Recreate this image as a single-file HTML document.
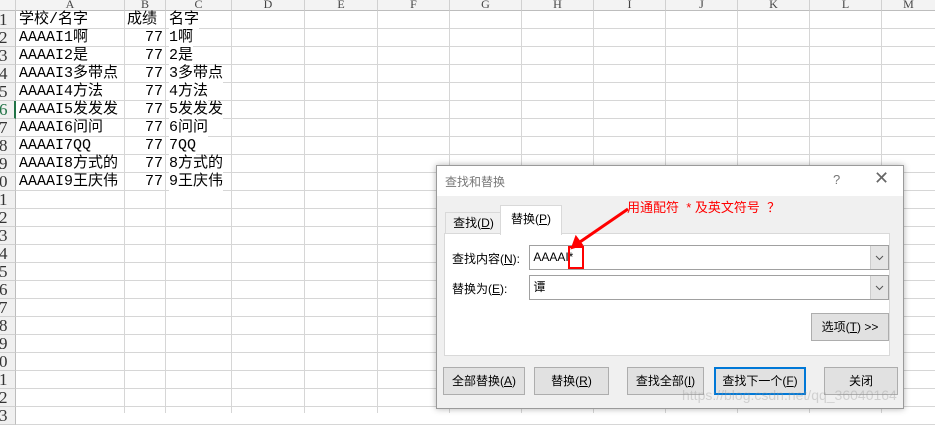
<!DOCTYPE html>
<html><head><meta charset="utf-8"><style>
body{margin:0;width:935px;height:413px;overflow:hidden;background:#fff;font-family:"Liberation Sans","Noto Sans CJK SC",sans-serif;position:relative}
.abs{position:absolute}
.ch{position:absolute;top:0;height:10px;background:#f3f3f3;border-right:1px solid #d0d0d0;border-bottom:1px solid #bdbdbd;font:12px "Liberation Serif",serif;line-height:9px;text-align:center;color:#444;overflow:hidden}
.rh{position:absolute;left:0;width:15px;height:17px;background:#f0f0f0;border-right:1px solid #bdbdbd;border-bottom:1px solid #d0d0d0;font:17px "Liberation Serif",serif;line-height:18px;text-align:left;color:#333;overflow:hidden;white-space:nowrap;text-indent:-1px}
.hl{position:absolute;left:16px;right:0;height:1px;background:#d6d6d6}
.vl{position:absolute;top:11px;bottom:0;width:1px;background:#d6d6d6}
.c{position:absolute;font-size:15px;line-height:18px;white-space:nowrap;color:#000;font-family:"Liberation Mono","Noto Sans CJK SC",monospace}
.dlg{position:absolute;left:436px;top:165px;width:466px;height:242px;background:#f0f0f0;border:1px solid #9a9a9a;box-shadow:0 0 6px rgba(0,0,0,.3)}
.btn{position:absolute;height:26px;border:1px solid #adadad;background:#e1e1e1;font-size:12px;line-height:26px;text-align:center;color:#000}
.inp{position:absolute;left:92px;width:358px;height:23px;background:#fff;border:1px solid #a0a0a0;font-size:12px;line-height:22px}
.dd{position:absolute;right:0;top:0;width:17px;height:23px;background:#e5e5e5;border-left:1px solid #ccc}
.lab{position:absolute;left:15px;font-size:12px;color:#000}
</style></head><body>
<div class="ch" style="left:0;width:15px"></div>
<div class="ch" style="left:16px;width:108px">A</div>
<div class="ch" style="left:125px;width:40px">B</div>
<div class="ch" style="left:166px;width:65px">C</div>
<div class="ch" style="left:232px;width:72px">D</div>
<div class="ch" style="left:305px;width:72px">E</div>
<div class="ch" style="left:378px;width:71px">F</div>
<div class="ch" style="left:450px;width:71px">G</div>
<div class="ch" style="left:522px;width:71px">H</div>
<div class="ch" style="left:594px;width:71px">I</div>
<div class="ch" style="left:666px;width:71px">J</div>
<div class="ch" style="left:738px;width:71px">K</div>
<div class="ch" style="left:810px;width:71px">L</div>
<div class="ch" style="left:882px;width:53px">M</div>
<div id="g"></div>
<script>
var g=document.getElementById('g'),h='';
for(var i=1;i<=23;i++){var y=11+(i-1)*18;h+='<div class="rh" style="top:'+y+'px'+(i==6?';color:#217346;border-right:2px solid #217346;width:14px':'')+'">'+(i%10)+'</div><div class="hl" style="top:'+(y+17)+'px"></div>';}
[124,165,231,304,377,449,521,593,665,737,809,881].forEach(function(x){h+='<div class="vl" style="left:'+x+'px"></div>'});
var a=['学校/名字','AAAAI1啊','AAAAI2是','AAAAI3多带点','AAAAI4方法','AAAAI5发发发','AAAAI6问问','AAAAI7QQ','AAAAI8方式的','AAAAI9王庆伟'];
var c=['名字','1啊','2是','3多带点','4方法','5发发发','6问问','7QQ','8方式的','9王庆伟'];
for(var i=0;i<10;i++){var y=11+i*18;h+='<div class="c" style="left:19px;top:'+y+'px">'+a[i]+'</div>';
h+='<div class="c" style="left:'+(i?125:127)+'px;width:38px;text-align:'+(i?'right':'left')+';top:'+y+'px">'+(i?'77':'成绩')+'</div>';
h+='<div class="c" style="left:169px;top:'+y+'px;background:#fff">'+c[i]+'</div>';}
g.innerHTML=h;
</script>
<div class="dlg">
<div class="abs" style="left:0;top:0;width:466px;height:30px;background:#fff"></div>
<div class="abs" style="left:8px;top:7px;font-size:12px;color:#777">查找和替换</div>
<div class="abs" style="left:396px;top:6px;font-size:13px;color:#777">?</div>
<div class="abs" style="left:437px;top:2px;font-size:18px;color:#666">✕</div>
<div class="abs" style="left:7px;top:67px;width:444px;height:121px;background:#fff;border:1px solid #d9d9d9"></div>
<div class="abs" style="left:8px;top:46px;width:55px;height:21px;border:1px solid #d9d9d9;border-bottom:none;font-size:12px;line-height:21px;text-align:center">查找(<u>D</u>)</div>
<div class="abs" style="left:63px;top:39px;width:60px;height:29px;background:#fff;border:1px solid #d9d9d9;border-bottom:none;font-size:12px;line-height:26px;text-align:center">替换(<u>P</u>)</div>
<div class="lab" style="top:84px">查找内容(<u>N</u>):</div>
<div class="inp" style="top:79px">&nbsp;AAAAI*<div class="dd"><svg width="17" height="23"><path d="M5 10l3.5 3.5L12 10" stroke="#555" fill="none"/></svg></div></div>
<div class="lab" style="top:114px">替换为(<u>E</u>):</div>
<div class="inp" style="top:109px">&nbsp;谭<div class="dd"><svg width="17" height="23"><path d="M5 10l3.5 3.5L12 10" stroke="#555" fill="none"/></svg></div></div>
<div class="btn" style="left:374px;top:147px;width:76px">选项(<u>T</u>) &gt;&gt;</div>
<div class="btn" style="left:6px;top:201px;width:80px">全部替换(<u>A</u>)</div>
<div class="btn" style="left:97px;top:201px;width:73px">替换(<u>R</u>)</div>
<div class="btn" style="left:190px;top:201px;width:75px">查找全部(<u>I</u>)</div>
<div class="btn" style="left:277px;top:201px;width:88px;border:2px solid #0078d7;height:24px;line-height:24px">查找下一个(<u>F</u>)</div>
<div class="btn" style="left:387px;top:201px;width:72px">关闭</div>
<div class="abs" style="left:131px;top:80px;width:12px;height:19px;border:2px solid #f00"></div>
<div class="abs" style="left:190px;top:31px;font-size:13px;color:#f00;white-space:nowrap">用通配符 &nbsp;* 及英文符号 &nbsp;？</div>
<svg class="abs" style="left:0;top:0" width="466" height="242"><path d="M191 43L140 78" stroke="#f00" stroke-width="3"/><path d="M135 82l4-11 6 8z" fill="#f00" stroke="#f00" stroke-width="2"/></svg>
<div class="abs" style="left:245px;top:221px;font-size:14px;color:rgba(150,150,150,.35);white-space:nowrap">https://blog.csdn.net/qq_36040164</div>
</div>
</body></html>
